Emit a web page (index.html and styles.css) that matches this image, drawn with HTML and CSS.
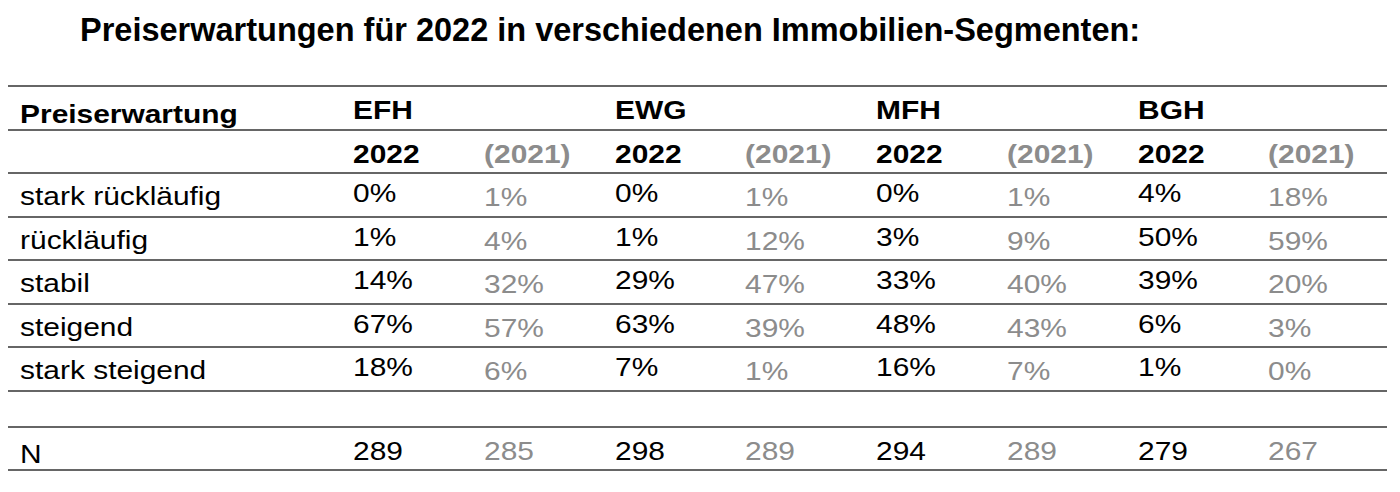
FILE: index.html
```html
<!DOCTYPE html>
<html lang="de">
<head>
<meta charset="utf-8">
<title>Preiserwartungen 2022</title>
<link rel="stylesheet" href="styles.css">
</head>
<body>
<h1 class="title">Preiserwartungen für 2022 in verschiedenen Immobilien-Segmenten:</h1>
<div class="table">
  <div class="row row-head">
    <div class="cell label">Preiserwartung</div>
    <div class="cell seg">EFH</div><div class="cell"></div>
    <div class="cell seg">EWG</div><div class="cell"></div>
    <div class="cell seg">MFH</div><div class="cell"></div>
    <div class="cell seg">BGH</div><div class="cell"></div>
  </div>
  <div class="row row-year">
    <div class="cell label"></div>
    <div class="cell y-now">2022</div><div class="cell y-prev">(2021)</div>
    <div class="cell y-now">2022</div><div class="cell y-prev">(2021)</div>
    <div class="cell y-now">2022</div><div class="cell y-prev">(2021)</div>
    <div class="cell y-now">2022</div><div class="cell y-prev">(2021)</div>
  </div>
  <div class="row row-data">
    <div class="cell label">stark rückläufig</div>
    <div class="cell now">0%</div><div class="cell prev">1%</div>
    <div class="cell now">0%</div><div class="cell prev">1%</div>
    <div class="cell now">0%</div><div class="cell prev">1%</div>
    <div class="cell now">4%</div><div class="cell prev">18%</div>
  </div>
  <div class="row row-data">
    <div class="cell label">rückläufig</div>
    <div class="cell now">1%</div><div class="cell prev">4%</div>
    <div class="cell now">1%</div><div class="cell prev">12%</div>
    <div class="cell now">3%</div><div class="cell prev">9%</div>
    <div class="cell now">50%</div><div class="cell prev">59%</div>
  </div>
  <div class="row row-data">
    <div class="cell label">stabil</div>
    <div class="cell now">14%</div><div class="cell prev">32%</div>
    <div class="cell now">29%</div><div class="cell prev">47%</div>
    <div class="cell now">33%</div><div class="cell prev">40%</div>
    <div class="cell now">39%</div><div class="cell prev">20%</div>
  </div>
  <div class="row row-data">
    <div class="cell label">steigend</div>
    <div class="cell now">67%</div><div class="cell prev">57%</div>
    <div class="cell now">63%</div><div class="cell prev">39%</div>
    <div class="cell now">48%</div><div class="cell prev">43%</div>
    <div class="cell now">6%</div><div class="cell prev">3%</div>
  </div>
  <div class="row row-data">
    <div class="cell label">stark steigend</div>
    <div class="cell now">18%</div><div class="cell prev">6%</div>
    <div class="cell now">7%</div><div class="cell prev">1%</div>
    <div class="cell now">16%</div><div class="cell prev">7%</div>
    <div class="cell now">1%</div><div class="cell prev">0%</div>
  </div>
  <div class="row row-empty"></div>
  <div class="row row-n">
    <div class="cell label">N</div>
    <div class="cell now">289</div><div class="cell prev">285</div>
    <div class="cell now">298</div><div class="cell prev">289</div>
    <div class="cell now">294</div><div class="cell prev">289</div>
    <div class="cell now">279</div><div class="cell prev">267</div>
  </div>
</div>
</body>
</html>
```

FILE: styles.css
```css
html, body {
  margin: 0;
  padding: 0;
  background: #ffffff;
}

body {
  font-family: "Liberation Sans", Arial, Helvetica, sans-serif;
  color: #000000;
}

.title {
  margin: 0;
  padding: 11px 0 0 80px;
  font-size: 32.5px;
  line-height: 38px;
  font-weight: 700;
  color: #000000;
}

.table {
  margin: 36px 0 0 8px;
  width: 1379px;
  border-top: 2px solid #666666;
}

.row {
  display: grid;
  grid-template-columns: 333px repeat(8, 1fr);
  box-sizing: border-box;
  border-bottom: 2px solid #666666;
}

/* the source table is set in a horizontally widened sans */
.cell {
  padding-left: 10.5px;
  font-size: 26px;
  line-height: 30px;
  white-space: nowrap;
  transform: scaleX(1.15);
  transform-origin: 0 50%;
}

.row-head { height: 44px; }
.row-year { height: 43px; }
.row-data { height: 43.6px; }
.row-empty { height: 36px; }
.row-n { height: 43px; }

.row-head .cell,
.row-year .cell {
  font-weight: 700;
}

.row-head .label { padding-top: 12px; }
.row-head .seg { padding-top: 8px; }

.row-year .y-now,
.row-year .y-prev { padding-top: 8px; }

.y-prev,
.prev {
  color: #8c8c8c;
}

.row-data .label { padding-top: 7px; }
.row-data .now { padding-top: 4px; }
.row-data .prev { padding-top: 8px; }

.row-n .label { padding-top: 11px; }
.row-n .now,
.row-n .prev { padding-top: 8px; }
```
